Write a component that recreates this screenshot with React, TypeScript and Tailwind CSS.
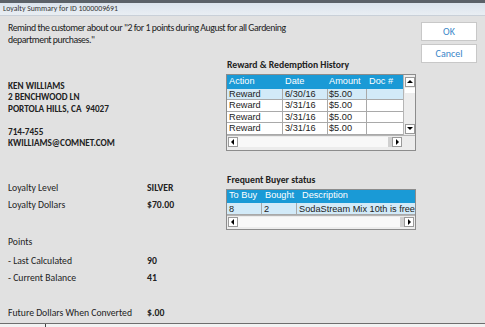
import React from "react";

const label = "font-['Carlito','Lato','Open_Sans',sans-serif]";

function Arrow({ dir }: { dir: "up" | "down" | "left" | "right" }) {
  const pts: Record<string, string> = {
    up: "1,5 4,2 7,5",
    down: "1,2 4,5 7,2",
    left: "5,1 2,4 5,7",
    right: "3,1 6,4 3,7",
  };
  return (
    <svg width="8" height="8" viewBox="0 0 8 8">
      <polygon points={pts[dir]} fill="#000" />
    </svg>
  );
}

function ScrollBtn({ dir }: { dir: "up" | "down" | "left" | "right" }) {
  return (
    <div className="w-[10px] h-[10px] bg-white border border-[#9a9a9a] flex items-center justify-center">
      <Arrow dir={dir} />
    </div>
  );
}

function HScroll() {
  return (
    <div className="flex h-[13px] bg-[#ececec] border-t border-[#b5b5b5] items-center px-[1px]">
      <ScrollBtn dir="left" />
      <div className="flex-1 h-[10px] bg-[#f8f8f8]" />
      <div className="w-[4px] h-[10px] bg-[#d0d0d0]" />
      <ScrollBtn dir="right" />
    </div>
  );
}

export default function App() {
  const rows = [
    ["Reward", "6/30/16", "$5.00", ""],
    ["Reward", "3/31/16", "$5.00", ""],
    ["Reward", "3/31/16", "$5.00", ""],
    ["Reward", "3/31/16", "$5.00", ""],
  ];
  return (
    <div className="w-[485px] h-[327px] bg-[#e1e1e1] flex flex-col overflow-hidden text-[#222]">
      <div className="h-[3px] bg-[#5b6168]" />
      <div className="h-[13px] bg-gradient-to-b from-[#dbe3ec] to-[#e9eef3] flex items-center pl-[3px] border-b border-[#c9d0d8]">
        <span className={`${label} text-[7.8px] text-[#333]`}>Loyalty Summary for ID 1000009691</span>
      </div>
      <div className="flex flex-1">
        <div className="flex flex-col w-[420px]">
          <p className={`${label} text-[9.8px] tracking-[-0.45px] leading-[11.5px] pl-[8px] pt-[7px] whitespace-nowrap`}>
            Remind the customer about our "2 for 1 points during August for all Gardening
            <br />
            department purchases."
          </p>
          <div className="flex mt-[13px]">
            <div className={`${label} w-[226px] pl-[8px] flex flex-col`}>
              <div className="mt-[21px] font-bold text-[9.2px] leading-[11.3px] flex flex-col">
                <span>KEN WILLIAMS</span>
                <span>2 BENCHWOOD LN</span>
                <span>PORTOLA HILLS, CA&nbsp; 94027</span>
                <span className="mt-[12px]">714-7455</span>
                <span>KWILLIAMS@COMNET.COM</span>
              </div>
              <div className="mt-[33.5px] flex flex-col text-[9.7px] leading-[12px]">
                <div className="flex"><span className="w-[139px]">Loyalty Level</span><span className="font-bold">SILVER</span></div>
                <div className="flex mt-[5.5px]"><span className="w-[139px]">Loyalty Dollars</span><span className="font-bold">$70.00</span></div>
                <div className="flex mt-[25px]"><span className="w-[139px]">Points</span></div>
                <div className="flex mt-[7px]"><span className="w-[139px]">- Last Calculated</span><span className="font-bold">90</span></div>
                <div className="flex mt-[5px]"><span className="w-[139px]">- Current Balance</span><span className="font-bold">41</span></div>
                <div className="flex mt-[22.5px]"><span className="w-[139px]">Future Dollars When Converted</span><span className="font-bold">$.00</span></div>
              </div>
            </div>
            <div className="w-[190px] flex flex-col">
              <div className={`${label} font-bold text-[9.7px] leading-[12px] pl-[1px]`}>Reward &amp; Redemption History</div>
              <div className="mt-[3px] border border-[#8c8c8c] bg-[#ececec] flex flex-col font-['Liberation_Sans',Arial,sans-serif] text-[9.2px]">
                <div className="flex">
                  <div className="flex-1 flex flex-col">
                    <div className="flex h-[13.5px] bg-[#1a9ad6] text-white items-center">
                      <span className="w-[56px] pl-[2px]">Action</span>
                      <span className="w-[45px] pl-[2px]">Date</span>
                      <span className="w-[39px] pl-[1px]">Amount</span>
                      <span className="flex-1 pl-[2px]">Doc #</span>
                    </div>
                    {rows.map((r, i) => (
                      <div key={i} className={`flex h-[11.5px] items-center border-b border-[#a9a9a9] ${i === 0 ? "bg-[#d2eaf8]" : "bg-white"}`}>
                        <span className="w-[56px] pl-[2px] border-r border-[#a9a9a9] h-full leading-[11px]">{r[0]}</span>
                        <span className="w-[45px] pl-[2px] border-r border-[#a9a9a9] h-full leading-[11px]">{r[1]}</span>
                        <span className="w-[39px] pl-[1px] border-r border-[#a9a9a9] h-full leading-[11px]">{r[2]}</span>
                        <span className="flex-1 h-full">{r[3]}</span>
                      </div>
                    ))}
                  </div>
                  <div className="w-[12px] bg-[#ececec] flex flex-col items-center pt-[2px] pb-[1px] border-l border-[#b5b5b5]">
                    <ScrollBtn dir="up" />
                    <div className="w-[10px] h-[5px] bg-white mt-[1px]" />
                    <div className="flex-1" />
                    <ScrollBtn dir="down" />
                  </div>
                </div>
                <div className="flex pb-[2px]">
                  <div className="flex-1"><HScroll /></div>
                  <div className="w-[12px] h-[13px] bg-[#ececec] border-t border-[#b5b5b5]" />
                </div>
              </div>
              <div className={`${label} font-bold text-[9.7px] leading-[12px] pl-[1px] mt-[23px]`}>Frequent Buyer status</div>
              <div className="mt-[3px] border border-[#8c8c8c] bg-[#ececec] flex flex-col font-['Liberation_Sans',Arial,sans-serif] text-[9.2px]">
                <div className="flex h-[13px] bg-[#1a9ad6] text-white items-center">
                  <span className="w-[36px] pl-[2px]">To Buy</span>
                  <span className="w-[36px] pl-[2px]">Bought</span>
                  <span className="flex-1 pl-[3px]">Description</span>
                </div>
                <div className="flex h-[12px] items-center bg-[#d2eaf8] border-b border-[#a9a9a9]">
                  <span className="w-[36px] pl-[2px] border-r border-[#a9a9a9] h-full leading-[12px]">8</span>
                  <span className="w-[36px] pl-[2px] border-r border-[#a9a9a9] h-full leading-[12px]">2</span>
                  <span className="flex-1 pl-[2px] h-full leading-[12px] whitespace-nowrap">SodaStream Mix 10th is free</span>
                </div>
                <div className="pb-[1px]"><HScroll /></div>
              </div>
            </div>
          </div>
        </div>
        <div className="flex flex-col pt-[6px] gap-[3px] ml-[1px]">
          <button className={`${label} w-[56px] h-[19px] bg-white border border-[#c8c8c8] text-[#3a86c8] text-[10px]`}>OK</button>
          <button className={`${label} w-[56px] h-[19px] bg-white border border-[#c8c8c8] text-[#3a86c8] text-[10px]`}>Cancel</button>
        </div>
      </div>
      <div className="h-[4px] bg-[#f2f2f2] border-t border-[#6e6e6e] relative">
        <div className="absolute left-[45px] top-0 w-[1px] h-[4px] bg-[#444]" />
      </div>
    </div>
  );
}
